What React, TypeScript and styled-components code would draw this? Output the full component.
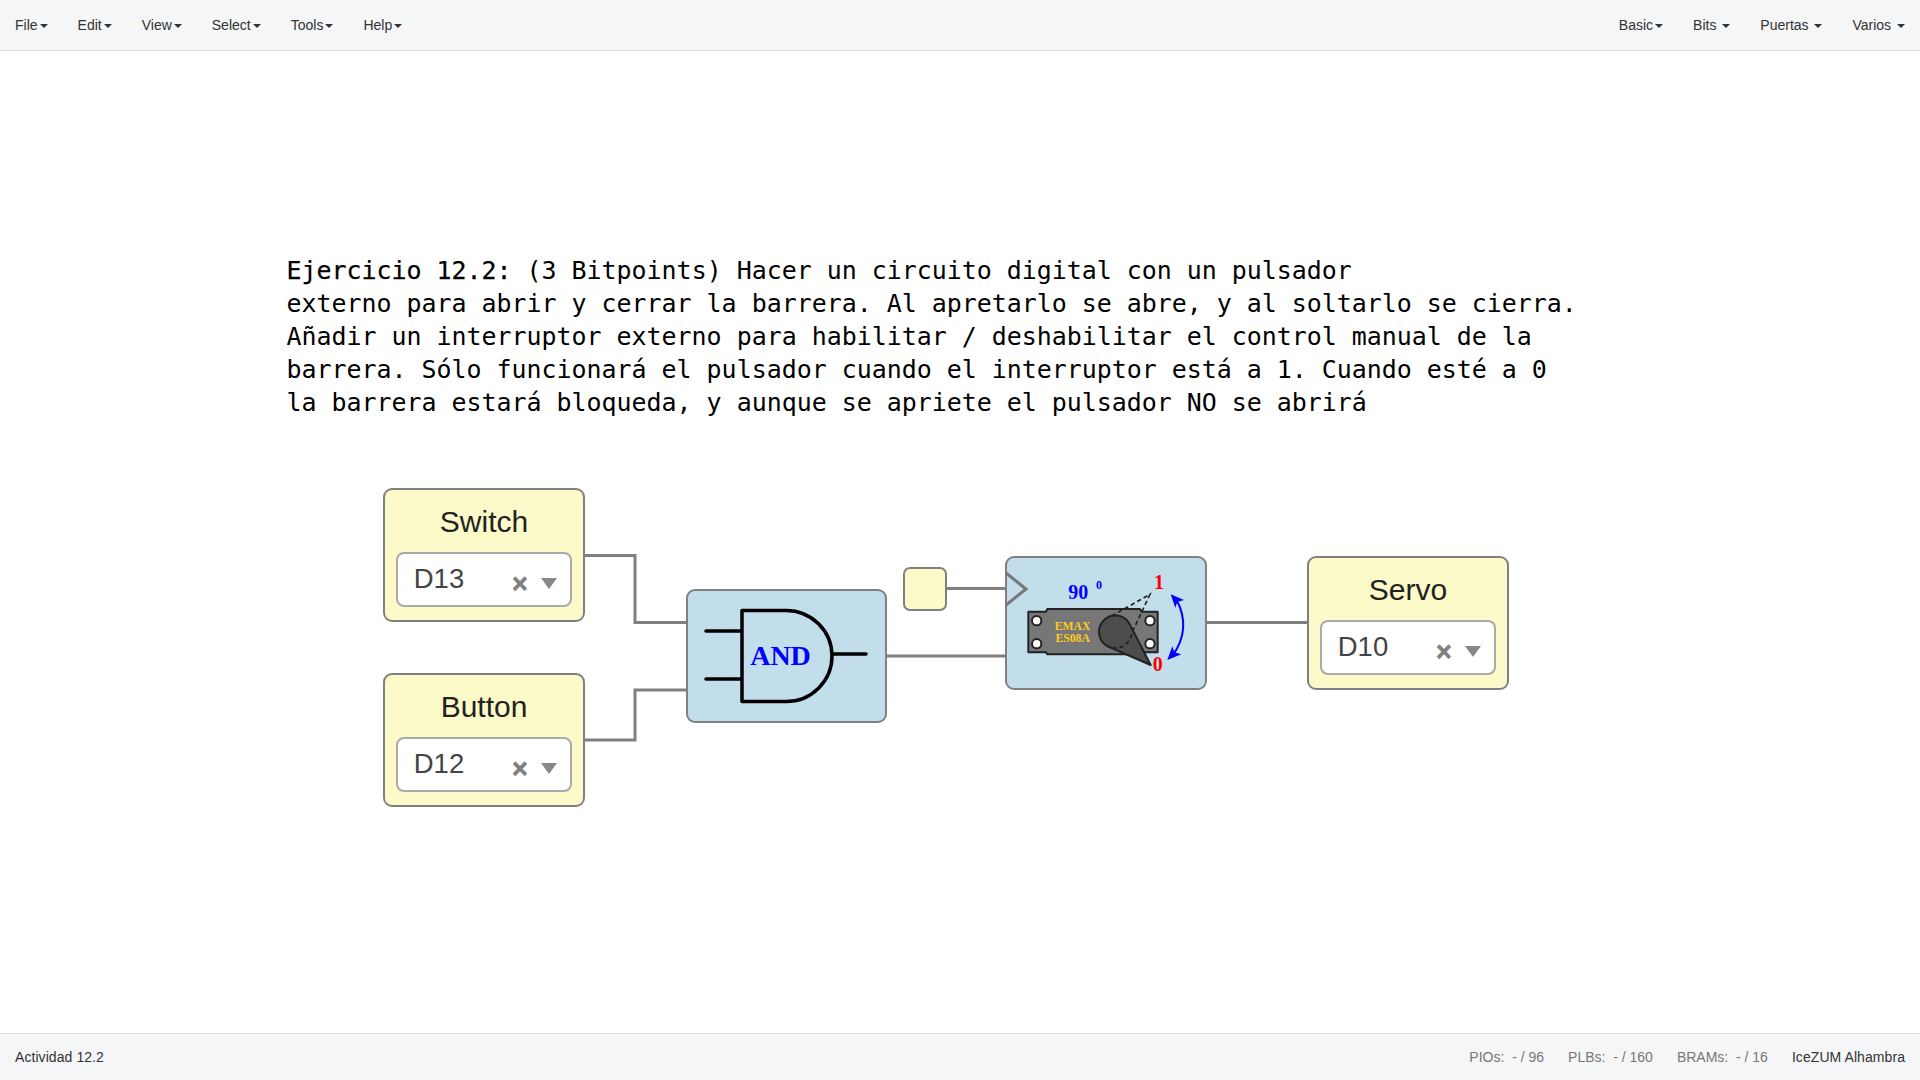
import React from "react";
import styled, { createGlobalStyle } from "styled-components";

const Global = createGlobalStyle`
  html, body { margin: 0; padding: 0; height: 100%; background: #fff; overflow: hidden; }
  #root { height: 100%; }
  * { box-sizing: border-box; }
`;

const Page = styled.div`
  display: flex;
  flex-direction: column;
  height: 100vh;
  font-family: "Liberation Sans", Arial, sans-serif;
  font-size: 14px;
  color: #333;
`;

const Navbar = styled.nav`
  flex: none;
  height: 51px;
  display: flex;
  justify-content: space-between;
  background: #f5f6f8;
  border-bottom: 1px solid #d9dde0;
`;

const Menu = styled.ul`
  display: flex;
  margin: 0;
  padding: 0;
  list-style: none;
`;

const MenuItem = styled.li`
  padding: 0 15px;
  line-height: 50px;
  white-space: pre;
`;

const Caret = styled.span`
  display: inline-block;
  margin-left: 2px;
  vertical-align: middle;
  border-top: 4px solid #333;
  border-left: 4px solid transparent;
  border-right: 4px solid transparent;
`;

const Canvas = styled.main`
  flex: 1;
  position: relative;
  overflow: hidden;
`;

const Wires = styled.svg`
  position: absolute;
  left: 0;
  top: 0;
  width: 100%;
  height: 100%;
`;

const Wire = styled.path`
  fill: none;
  stroke: #808080;
  stroke-width: 3;
`;

const Note = styled.div<{ $x: number; $y: number }>`
  position: absolute;
  left: ${(p) => p.$x}px;
  top: ${(p) => p.$y}px;
  font-family: "DejaVu Sans Mono", "Liberation Mono", monospace;
  font-size: 24.93px;
  line-height: 33px;
  color: #000;
  white-space: pre;
`;

const Lead = styled.span`
  -webkit-text-stroke: 0.25px #000;
`;

const Block = styled.div<{ $x: number; $y: number; $w: number; $h: number; $r?: number; $bg: string }>`
  position: absolute;
  left: ${(p) => p.$x}px;
  top: ${(p) => p.$y}px;
  width: ${(p) => p.$w}px;
  height: ${(p) => p.$h}px;
  background: ${(p) => p.$bg};
  border: 2.5px solid #808080;
  border-radius: ${(p) => p.$r ?? 9}px;
`;

const Title = styled.div`
  height: 60px;
  padding-top: 14px;
  text-align: center;
  font-size: 30px;
  line-height: 36px;
  color: #222;
`;

const Select = styled.div`
  display: flex;
  align-items: center;
  height: 55px;
  margin: 2px 10.5px 0;
  padding: 0 13px 0 16px;
  background: #fff;
  border: 2.5px solid #aaa;
  border-radius: 8px;
  color: #444;
  font-size: 27.5px;
`;

const SelectValue = styled.span`
  flex: 1;
  position: relative;
  top: -1px;
`;

const Clear = styled.span`
  position: relative;
  top: 5px;
  margin-right: 13.5px;
  font-size: 27px;
  line-height: 1;
  font-weight: 700;
  color: #808080;
  -webkit-text-stroke: 0.6px #808080;
`;

const Arrow = styled.span`
  position: relative;
  top: 4px;
  border-top: 11px solid #888;
  border-left: 8.5px solid transparent;
  border-right: 8.5px solid transparent;
`;

const BlockArt = styled.svg<{ $x: number; $y: number }>`
  position: absolute;
  left: ${(p) => p.$x}px;
  top: ${(p) => p.$y}px;
  overflow: visible;
`;

const Footer = styled.footer`
  flex: none;
  height: 47px;
  display: flex;
  align-items: center;
  justify-content: space-between;
  padding: 0 15px;
  background: #f5f6f8;
  border-top: 1.5px solid #dcdfe2;
`;

const Activity = styled.span`
  letter-spacing: 0.07px;
`;

const Stats = styled.div`
  display: flex;
  gap: 24px;
  color: #777;
  white-space: pre;
`;

const Board = styled.span`
  color: #333;
  letter-spacing: 0.07px;
`;

const TOP = 51;

const PinBlock = ({ x, y, title, value }: { x: number; y: number; title: string; value: string }) => (
  <Block $x={x} $y={y - TOP} $w={201.5} $h={134} $bg="#fbfac8">
    <Title>{title}</Title>
    <Select>
      <SelectValue>{value}</SelectValue>
      <Clear>×</Clear>
      <Arrow />
    </Select>
  </Block>
);

const serif = "'Liberation Serif', 'Times New Roman', serif";

const AndArt = () => (
  <BlockArt $x={-2} $y={-2.5} width={200} height={134} viewBox="0 0 200 134">
    <path
      d="M20 42H56M20 90H56M146 65H180M56 21.5H100A46 45.5 0 0 1 100 112.5H56Z"
      fill="none"
      stroke="#000"
      strokeWidth={3.5}
      strokeLinecap="round"
      strokeLinejoin="round"
    />
    <text x={94.5} y={75.5} textAnchor="middle" fontFamily={serif} fontWeight={700} fontSize={28} fill="#00f">
      AND
    </text>
  </BlockArt>
);

const ServoArt = () => (
  <BlockArt $x={12.3} $y={6.5} width={180} height={120} viewBox="0 0 540 360">
    <path
      d="M25 140H78L82 132H360L365 140H413V262H365L360 268H82L78 262H25Z"
      fill="#777"
      stroke="#222"
      strokeWidth={6}
      strokeLinejoin="round"
    />
    {[
      [50, 167],
      [50, 236],
      [390, 167],
      [390, 236],
    ].map(([cx, cy]) => (
      <circle key={`${cx}-${cy}`} cx={cx} cy={cy} r={14} fill="#fff" stroke="#222" strokeWidth={6} />
    ))}
    <path
      d="M392 300L331 181A49 49 0 1 0 268 246Z"
      fill="#4d4d4d"
      stroke="#222"
      strokeWidth={6}
      strokeLinejoin="round"
    />
    <path
      d="M275 153L390 88L335 205A48 48 0 0 1 280 248"
      fill="none"
      stroke="#222"
      strokeWidth={5}
      strokeDasharray="13 9"
    />
    <path d="M470 105Q515 190 458 272" fill="none" stroke="#00f" strokeWidth={6} />
    <path d="M452 88L492 105L472 111L466 128Z" fill="#00f" />
    <path d="M442 285L484 268L463 262L457 244Z" fill="#00f" />
    <g fontFamily={serif} fontWeight={700}>
      <text x={145} y={103} fontSize={60} fill="#00f">90</text>
      <text x={228} y={72} fontSize={36} fill="#00f">0</text>
      <text x={402} y={72} fontSize={60} fill="#f00">1</text>
      <text x={398} y={318} fontSize={60} fill="#f00">0</text>
      <text x={158} y={195} fontSize={35} textAnchor="middle" fill="#fc2">EMAX</text>
      <text x={158} y={232} fontSize={35} textAnchor="middle" fill="#fc2">ES08A</text>
    </g>
  </BlockArt>
);

const leftMenus = ["File", "Edit", "View", "Select", "Tools", "Help"];
const rightMenus = ["Basic", "Bits ", "Puertas ", "Varios "];

export default function App() {
  return (
    <Page>
      <Global />
      <Navbar>
        <Menu>
          {leftMenus.map((m) => (
            <MenuItem key={m}>
              {m}
              <Caret />
            </MenuItem>
          ))}
        </Menu>
        <Menu>
          {rightMenus.map((m) => (
            <MenuItem key={m}>
              {m}
              <Caret />
            </MenuItem>
          ))}
        </Menu>
      </Navbar>
      <Canvas>
        <Wires>
          <g transform={`translate(0 ${-TOP})`}>
            <Wire d="M584 555.5H635V622.5H686" />
            <Wire d="M584 740H635V690H686" />
            <Wire d="M885 656H1006" />
            <Wire d="M947 588.5H1006" />
            <Wire d="M1206 622.5H1308" />
          </g>
        </Wires>
        <Note $x={286.5} $y={254 - TOP}>
          <Lead>Ejercicio 12.2:</Lead>
          {" (3 Bitpoints) Hacer un circuito digital con un pulsador\n"}
          {"externo para abrir y cerrar la barrera. Al apretarlo se abre, y al soltarlo se cierra.\n"}
          {"Añadir un interruptor externo para habilitar / deshabilitar el control manual de la\n"}
          {"barrera. Sólo funcionará el pulsador cuando el interruptor está a 1. Cuando esté a 0\n"}
          {"la barrera estará bloqueda, y aunque se apriete el pulsador NO se abrirá"}
        </Note>
        <PinBlock x={383.25} y={488} title="Switch" value="D13" />
        <PinBlock x={383.25} y={673} title="Button" value="D12" />
        <PinBlock x={1307.25} y={556} title="Servo" value="D10" />
        <Block $x={685.5} $y={589 - TOP} $w={201} $h={134} $bg="#c2deea">
          <AndArt />
        </Block>
        <Block $x={903} $y={567 - TOP} $w={44} $h={44} $r={7} $bg="#fbfac8" />
        <Block $x={1005.25} $y={556 - TOP} $w={201.5} $h={134} $bg="#c2deea">
          <BlockArt $x={-2} $y={-2.5} width={24} height={54} viewBox="0 0 24 54">
            <path d="M1 17L21 33L1 49" fill="none" stroke="#777" strokeWidth={3} />
          </BlockArt>
          <ServoArt />
        </Block>
      </Canvas>
      <Footer>
        <Activity>Actividad 12.2</Activity>
        <Stats>
          <span>{"PIOs:  - / 96"}</span>
          <span>{"PLBs:  - / 160"}</span>
          <span>{"BRAMs:  - / 16"}</span>
          <Board>IceZUM Alhambra</Board>
        </Stats>
      </Footer>
    </Page>
  );
}
